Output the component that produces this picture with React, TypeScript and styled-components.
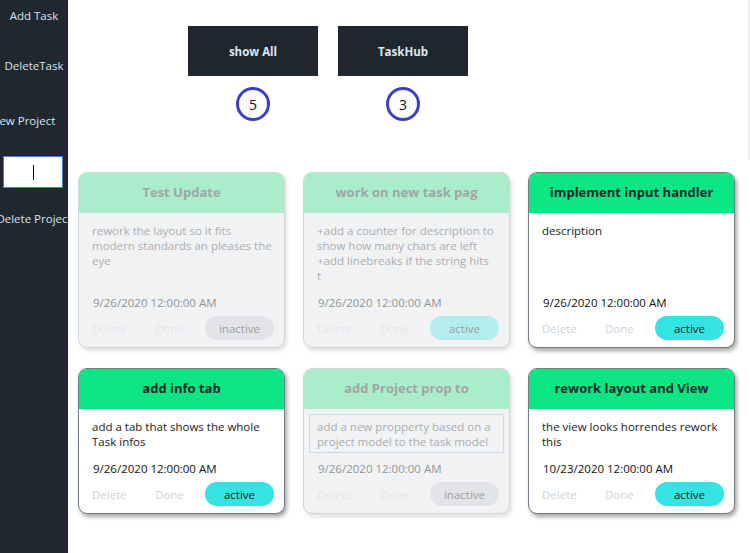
import React from "react";
import styled, { createGlobalStyle } from "styled-components";

const GlobalStyle = createGlobalStyle`
  html, body {
    margin: 0;
    padding: 0;
    background: #ffffff;
    font-family: "Open Sans", "Noto Sans", sans-serif;
  }
`;

const Page = styled.div`
  display: flex;
  min-height: 553px;
  width: 750px;
  overflow: hidden;
`;

const Sidebar = styled.nav`
  width: 68px;
  flex-shrink: 0;
  min-height: 553px;
  background: #20272e;
  overflow: hidden;
  display: flex;
  flex-direction: column;
`;

const NavItem = styled.div<{ $top: number; $inset?: number }>`
  display: flex;
  justify-content: center;
  white-space: nowrap;
  margin-top: ${(p) => p.$top}px;
  padding-right: ${(p) => p.$inset ?? 0}px;
  height: 18px;
  line-height: 18px;
  font-size: 11.5px;
  color: #d9e4ec;
`;

const NavInput = styled.div`
  margin: 26px 5px 0 3px;
  height: 30px;
  background: #ffffff;
  border: 1px solid #3f7fd6;
  display: flex;
  align-items: center;
  justify-content: center;
`;

const Caret = styled.span`
  width: 1px;
  height: 15px;
  background: #000;
`;

const Main = styled.main`
  flex: 1;
  display: flex;
  flex-direction: column;
`;

const Top = styled.section`
  height: 160px;
  display: flex;
  gap: 20px;
  padding-left: 120px;
  padding-top: 26px;
  box-sizing: border-box;
  border-right: 2px solid #eeeeee;
`;

const Filter = styled.div`
  display: flex;
  flex-direction: column;
  align-items: center;
  gap: 11px;
`;

const FilterButton = styled.button`
  width: 130px;
  height: 50px;
  border: none;
  background: #1f262e;
  color: #dde6ee;
  font-family: inherit;
  font-weight: 700;
  font-size: 11.5px;
`;

const Count = styled.div`
  width: 28px;
  height: 28px;
  border-radius: 50%;
  border: 3px solid #3b3fc6;
  display: flex;
  align-items: center;
  justify-content: center;
  font-size: 14px;
  color: #111;
`;

const Grid = styled.div`
  display: grid;
  grid-template-columns: repeat(3, 207px);
  column-gap: 18px;
  row-gap: 20px;
  padding: 12px 0 0 10px;
`;

const Card = styled.article<{ $faded: boolean }>`
  display: flex;
  flex-direction: column;
  border-radius: 9px;
  overflow: hidden;
  border: 1px solid ${(p) => (p.$faded ? "#d2d5d9" : "#727b86")};
  background: ${(p) => (p.$faded ? "#f1f2f4" : "#ffffff")};
  box-shadow: ${(p) =>
    p.$faded ? "2px 3px 4px rgba(0,0,0,0.12)" : "2px 3px 4px rgba(0,0,0,0.35)"};
`;

const CardHeader = styled.header<{ $faded: boolean }>`
  height: 40px;
  box-sizing: border-box;
  padding-bottom: 3px;
  display: flex;
  align-items: center;
  justify-content: center;
  background: ${(p) => (p.$faded ? "#aaedcb" : "#0be584")};
  color: ${(p) => (p.$faded ? "#a2a5a7" : "#1c2a2b")};
  font-weight: 700;
  font-size: 13px;
  white-space: nowrap;
  overflow: hidden;
`;

const Description = styled.div<{ $faded: boolean; $boxed: boolean }>`
  flex: 1;
  margin: 5px 5px 0;
  padding: 4px 7px 3px;
  border: 1px solid ${(p) => (p.$boxed ? "#cfd8e2" : "transparent")};
  font-size: 11.5px;
  line-height: 15px;
  white-space: pre;
  color: ${(p) => (p.$faded ? "#acaeb0" : "#1a1a1a")};
`;

const DateLine = styled.div<{ $faded: boolean }>`
  margin-top: 8px;
  padding-left: 14px;
  font-size: 11.5px;
  line-height: 16px;
  color: ${(p) => (p.$faded ? "#929496" : "#111111")};
`;

const Actions = styled.div`
  display: flex;
  align-items: center;
  padding: 5px 10px 7px 13px;
`;

const Action = styled.span<{ $faded: boolean; $width: number }>`
  width: ${(p) => p.$width}px;
  font-size: 11.5px;
  color: ${(p) => (p.$faded ? "#e3e5e8" : "#cdd3dc")};
`;

const StatusPill = styled.span<{ $faded: boolean; $active: boolean }>`
  margin-left: auto;
  width: 69px;
  height: 24px;
  border-radius: 12px;
  display: flex;
  align-items: center;
  justify-content: center;
  font-size: 11.5px;
  background: ${(p) =>
    p.$active ? (p.$faded ? "#b3eded" : "#36e3e3") : "#e2e4e7"};
  color: ${(p) => (p.$faded ? "#9ea0a2" : "#1e1e1e")};
`;

interface Task {
  title: string;
  description: string;
  date: string;
  active: boolean;
  faded: boolean;
  boxed?: boolean;
}

const tasks: Task[] = [
  {
    title: "Test Update",
    description: "rework the layout so it fits\nmodern standards an pleases the\neye",
    date: "9/26/2020 12:00:00 AM",
    active: false,
    faded: true,
  },
  {
    title: "work on new task pag",
    description:
      "+add a counter for description to\nshow how many chars are left\n+add linebreaks if the string hits\nt",
    date: "9/26/2020 12:00:00 AM",
    active: true,
    faded: true,
  },
  {
    title: "implement input handler",
    description: "description",
    date: "9/26/2020 12:00:00 AM",
    active: true,
    faded: false,
  },
  {
    title: "add info tab",
    description: "add a tab that shows the whole\nTask infos",
    date: "9/26/2020 12:00:00 AM",
    active: true,
    faded: false,
  },
  {
    title: "add Project prop to",
    description: "add a new propperty based on a\nproject model to the task model",
    date: "9/26/2020 12:00:00 AM",
    active: false,
    faded: true,
    boxed: true,
  },
  {
    title: "rework layout and View",
    description: "the view looks horrendes rework\nthis",
    date: "10/23/2020 12:00:00 AM",
    active: true,
    faded: false,
  },
];

const TaskCard: React.FC<{ task: Task }> = ({ task }) => (
  <Card $faded={task.faded}>
    <CardHeader $faded={task.faded}>{task.title}</CardHeader>
    <Description $faded={task.faded} $boxed={!!task.boxed}>
      {task.description}
    </Description>
    <DateLine $faded={task.faded}>{task.date}</DateLine>
    <Actions>
      <Action $faded={task.faded} $width={63}>
        Delete
      </Action>
      <Action $faded={task.faded} $width={40}>
        Done
      </Action>
      <StatusPill $faded={task.faded} $active={task.active}>
        {task.active ? "active" : "inactive"}
      </StatusPill>
    </Actions>
  </Card>
);

export default function App() {
  return (
    <Page>
      <GlobalStyle />
      <Sidebar>
        <NavItem $top={7}>Add Task</NavItem>
        <NavItem $top={32}>DeleteTask</NavItem>
        <NavItem $top={37} $inset={22}>
          New Project
        </NavItem>
        <NavInput>
          <Caret />
        </NavInput>
        <NavItem $top={22}>Delete Project</NavItem>
      </Sidebar>
      <Main>
        <Top>
          <Filter>
            <FilterButton>show All</FilterButton>
            <Count>5</Count>
          </Filter>
          <Filter>
            <FilterButton>TaskHub</FilterButton>
            <Count>3</Count>
          </Filter>
        </Top>
        <Grid>
          {tasks.map((t) => (
            <TaskCard key={t.title} task={t} />
          ))}
        </Grid>
      </Main>
    </Page>
  );
}
